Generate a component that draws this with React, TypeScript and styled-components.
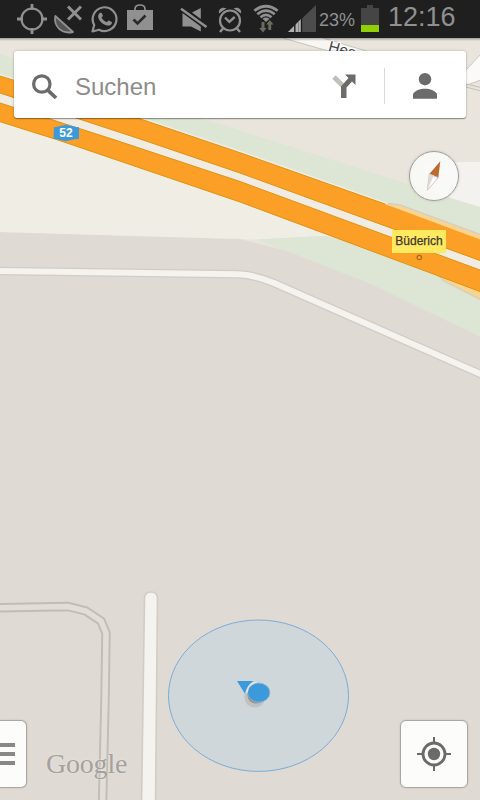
import React from 'react';
import styled, { createGlobalStyle } from 'styled-components';

const colors = {
  land: '#e9e5dd',
  field: '#f0ede4',
  block: '#dfdad4',
  park: '#dde5d4',
  highway: '#fb9f26',
  highwayEdge: '#e0920f',
  road: '#f5f3ef',
  roadEdge: '#d2ccc3',
  statusIcon: '#909090',
  icon: '#6b6b6b',
  blue: '#3d9ada',
};

const GlobalStyle = createGlobalStyle`
  * {
    box-sizing: border-box;
  }
  body {
    margin: 0;
    font-family: 'Liberation Sans', Arial, sans-serif;
  }
  svg {
    display: block;
  }
`;

const Screen = styled.div`
  display: flex;
  flex-direction: column;
  width: 480px;
  height: 800px;
  overflow: hidden;
`;

const StatusBar = styled.header`
  display: flex;
  justify-content: space-between;
  flex: none;
  height: 38px;
  padding: 0 25px 0 14px;
  background: #1f1f1f;
  color: ${colors.statusIcon};
`;

const StatusGroup = styled.div`
  display: flex;
  height: 38px;
`;

const StatusIcon = styled.svg<{ $width?: number }>`
  width: ${({ $width = 36 }) => $width}px;
  height: 38px;
  flex: none;
`;

const BatteryLevel = styled.span`
  width: 39px;
  padding-left: 1px;
  font-size: 18px;
  line-height: 40px;
  white-space: nowrap;
`;

const Clock = styled.span`
  width: 67px;
  margin-left: 7px;
  font-size: 27px;
  line-height: 34px;
  white-space: nowrap;
`;

const MapArea = styled.main`
  position: relative;
  display: flex;
  flex-direction: column;
  flex: 1;
  overflow: hidden;
  background: ${colors.block};
`;

const MapCanvas = styled.svg`
  position: absolute;
  inset: 0;
  width: 480px;
  height: 762px;
`;

const SearchCard = styled.div`
  position: relative;
  display: flex;
  align-items: center;
  height: 67px;
  margin: 13px 14px 0;
  padding: 2px 28px 0 17px;
  background: #fff;
  border-radius: 3px;
  box-shadow: 0 1px 1px rgba(0, 0, 0, 0.35), 0 0 3px rgba(0, 0, 0, 0.2);
`;

const SearchText = styled.span`
  flex: 1;
  padding: 3px 0 0 17px;
  color: #8c8c89;
  font-size: 24px;
  line-height: 28px;
`;

const Divider = styled.span`
  width: 1px;
  height: 36px;
  margin: 0 27px 0 28px;
  background: #dcd8d2;
`;

const Compass = styled.div`
  position: relative;
  align-self: flex-end;
  width: 50px;
  height: 50px;
  margin: 33px 21px 0 0;
  border: 1px solid #a09d98;
  border-radius: 50%;
  background: rgba(250, 249, 247, 0.9);
  box-shadow: 0 0 3px rgba(0, 0, 0, 0.15);
`;

const BottomBar = styled.div`
  position: relative;
  display: flex;
  align-items: flex-start;
  margin: auto 12px 12px 0;
`;

const MapButton = styled.button<{ $docked?: boolean }>`
  display: flex;
  align-items: center;
  justify-content: ${({ $docked }) => ($docked ? 'flex-start' : 'center')};
  width: ${({ $docked }) => ($docked ? 27 : 68)}px;
  height: 68px;
  padding: 0;
  border: 1px solid #aaa7a2;
  border-left-width: ${({ $docked }) => ($docked ? 0 : 1)}px;
  border-radius: ${({ $docked }) => ($docked ? '0 6px 6px 0' : '6px')};
  background: #fcfcfa;
  box-shadow: 0 0 2px rgba(0, 0, 0, 0.15);
`;

const Watermark = styled.span`
  flex: 1;
  padding: 28px 0 0 19px;
  color: #a5a19c;
  font-family: 'Liberation Serif', 'Times New Roman', serif;
  font-size: 28px;
  line-height: 32px;
  letter-spacing: -0.2px;
  text-shadow: 0 0 2px #efece7;
`;

const PlaceLabel = styled.span`
  position: absolute;
  left: 392px;
  top: 192px;
  width: 54px;
  height: 23px;
  background: #ffe95f;
  color: #3f3530;
  font-size: 12px;
  line-height: 22px;
  text-align: center;
  -webkit-text-stroke: 0.25px #3f3530;
`;

const Highway: React.FC<{ top: string; bottom: string; area: string }> = ({ top, bottom, area }) => (
  <g>
    <path d={area} fill={colors.highway} />
    <path d={top} fill='none' stroke={colors.highwayEdge} />
    <path d={bottom} fill='none' stroke={colors.highwayEdge} />
  </g>
);

const Road: React.FC<{ d: string; width: number }> = ({ d, width }) => (
  <g fill='none' strokeLinejoin='round' strokeLinecap='round'>
    <path d={d} stroke={colors.roadEdge} strokeWidth={width + 2.5} />
    <path d={d} stroke={colors.road} strokeWidth={width} />
  </g>
);

const TRACK = 'M-5 607.8 L68 606.5 L86 611 L101 621 L106 633 L105 700 L102.5 805';

const MapDrawing: React.FC = () => (
  <MapCanvas viewBox='0 38 480 762'>
    <defs>
      <linearGradient id='barShade' x1='0' y1='0' x2='0' y2='1'>
        <stop offset='0' stopColor='#000' stopOpacity='0.3' />
        <stop offset='1' stopColor='#000' stopOpacity='0' />
      </linearGradient>
    </defs>

    {/* areas */}
    <path d='M0 38 H480 V300 L240 239 L0 232 Z' fill={colors.land} />
    <path d='M0 54 L480 207 V336.5 L370 283.5 L257 239 L0 130 Z' fill={colors.park} />
    <path d='M0 74 L142 117.5 L240 150.5 L385 202 L480 250 V275 L325 236 L257 239.5 L0 232 Z' fill={colors.field} />
    <path d='M325 236 L257 239.5 L370 283.5 L480 336.5 V280 L400 250 Z' fill={colors.park} />
    <path d='M420 162 H480 V207 L440 194.5 Z' fill='#f4f2ef' />

    {/* streets at the top edge */}
    <path d='M283 38 L330 51.5 H368 L323 38 Z' fill='#f7f6f3' />
    <path d='M283 38 L330 51.5 M323 38 L368 51.5' stroke='#c9c4bb' fill='none' />
    <path d='M481 54 L464 72 V86 L481 80 Z' fill='#fbfaf8' stroke='#cbc6be' />
    <path d='M464 83.5 L481 87.5 M464 86.5 L481 91' stroke='#c4bfb8' fill='none' />
    <text x='327.5' y='51' transform='rotate(15 327.5 51)' fontSize='15.5' fill='#484848' stroke='#fff' strokeWidth='2' paintOrder='stroke'>
      Hes
    </text>

    {/* slip roads */}
    <path d='M384 203 L400 205.5 L480 234.5 V250 Z' fill='#f8d48f' />
    <path d='M388 203.5 L400 205 L480 234.5' stroke='#d2cdc4' strokeWidth='1.3' fill='none' />
    <path d='M436 274 L445 281 L480 299.5 V285 Z' fill='#f8d48f' />
    <path d='M438 275.5 L445 281.5 L480 299.5' stroke='#d2cdc4' strokeWidth='1.3' fill='none' />

    <path d='M0 93 L143 140 L240 173 L480 261 V270 L240 181.5 L115 140 L0 103 Z' fill='#f0ece3' />
    <Highway
      area='M0 76 L142 119.5 L240 152.7 L385 204 L480 239.5 V260.7 L240 173 L143 140 L0 93 Z'
      top='M0 76 L142 119.5 L240 152.7 L385 204'
      bottom='M0 93 L143 140 L240 173 L480 260.5'
    />
    <Highway
      area='M0 103 L115 140 L240 181.5 L480 270 V291.5 L440 276.5 L240 202 L58 140 L0 121.7 Z'
      top='M0 103 L115 140 L240 181.5 L480 270'
      bottom='M0 121.7 L58 140 L240 202 L440 276.5 L480 291.5'
    />

    <Road d='M-5 271 L238 274.3 Q255 275 274 283 L485 376' width={6} />
    <path d='M151 592 Q145 592 144.5 598 L141.5 805 H155.5 L157.5 598 Q157 592 151 592 Z' fill={colors.road} stroke={colors.roadEdge} strokeWidth='1.6' />
    <path d={TRACK} fill='none' stroke='#c0bcb6' strokeWidth='9.4' />
    <path d={TRACK} fill='none' stroke='#e2ddd7' strokeWidth='5.6' />

    {/* road number */}
    <path d='M54 127 Q57 127.5 60 126 L66 124.8 L72 126 Q76 127.5 79 127 V139 Q75 138.5 72 140 L66 141.2 L60 140 Q56 138.5 53.5 139 Z' fill={colors.blue} />
    <text x='66' y='137.4' fontSize='12' fontWeight='700' fill='#fff' textAnchor='middle'>
      52
    </text>
    <circle cx='419.3' cy='257.5' r='2.2' fill='#f5a93a' stroke='#a96a12' strokeWidth='1.2' />

    {/* current position */}
    <ellipse cx='258.5' cy='695.7' rx='90' ry='75.7' fill='#cfd7da' stroke='#7badd8' />
    <ellipse cx='254.8' cy='697' rx='10.5' ry='10.5' fill='#bab7b2' opacity='0.65' />
    <ellipse cx='256.5' cy='695.5' rx='9' ry='8' fill='#96928e' />
    <path d='M237 681 H253.5 Q248 684 244.8 693.5 Z' fill={colors.blue} />
    <ellipse cx='258.7' cy='692.6' rx='11.2' ry='9.6' fill={colors.blue} stroke='#94b7cd' strokeWidth='0.8' />
    <path d='M246.8 693 Q247.5 684 256.5 682' fill='none' stroke='#e0e2e0' strokeWidth='1.5' />

    <rect x='0' y='38' width='480' height='3' fill='url(#barShade)' />
  </MapCanvas>
);

const NotificationIcons: React.FC = () => (
  <StatusGroup>
    <StatusIcon viewBox='0 0 36 38' fill='none' stroke='currentColor' strokeWidth='2.2'>
      <circle cx='18' cy='19' r='10.5' />
      <path d='M18 4 V10 M18 28 V34 M3 19 H9 M27 19 H33' strokeWidth='2.8' />
    </StatusIcon>
    <StatusIcon viewBox='0 0 36 38' fill='none' stroke='currentColor'>
      <path d='M5.3 16 C3.5 26 11 34.5 23 32 Z' fill='#555' strokeWidth='1.8' strokeLinejoin='round' />
      <path d='M18 6.5 L31 19.5 M31 6.5 L18 19.5' strokeWidth='3' />
    </StatusIcon>
    <StatusIcon viewBox='0 0 36 38' fill='none' stroke='currentColor'>
      <path d='M6.5 31.5 L8.2 25 A11.9 11.9 0 1 1 13 29.7 Z' strokeWidth='2.2' strokeLinejoin='round' />
      <path
        d='M14.4 12.8 C15.5 12.3 16 13 16.8 15.4 C17 16.2 15.7 17 15.5 17.6 C16.8 20.2 18.6 21.5 21 22.2 C21.7 21.5 22.2 20.5 23 20.6 L26 22.2 C26 25.5 22.5 26.1 20 25.2 C15.6 23.6 12.7 20.2 12.2 17 C12 15.2 13 13.2 14.4 12.8 Z'
        fill='currentColor'
        stroke='none'
      />
    </StatusIcon>
    <StatusIcon viewBox='0 0 36 38' fill='none'>
      <path d='M5 10 H31 V30 H5 Z' fill='currentColor' />
      <path d='M13 11 V9 Q13 5 18 5 Q23 5 23 9 V11' stroke='currentColor' strokeWidth='1.7' />
      <path d='M11.5 19.5 L15.5 23.5 L23.5 15.5' stroke='#2a2a2a' strokeWidth='2.6' />
    </StatusIcon>
  </StatusGroup>
);

const SystemIcons: React.FC = () => (
  <StatusGroup>
    <StatusIcon viewBox='0 0 36 38'>
      <path d='M16 12.5 L24.8 8 V19 Z' fill='currentColor' />
      <path d='M6.5 13 L24.8 26.5 V31.5 L15 26.5 H6.5 Z' fill='currentColor' />
      <path d='M4 8 L31 27.3' stroke='#1f1f1f' strokeWidth='4.4' />
      <path d='M5 8.7 L30.5 26.9' stroke='currentColor' strokeWidth='2.5' />
    </StatusIcon>
    <StatusIcon viewBox='0 0 36 38' fill='none' stroke='currentColor'>
      <circle cx='18' cy='20.5' r='10' strokeWidth='2.2' />
      <path d='M13 17.5 L17.3 21.8 L22.7 17' strokeWidth='2.4' />
      <path d='M7 13.5 C6 9.5 9.5 6.5 14.5 8.3 Z M29 13.5 C30 9.5 26.5 6.5 21.5 8.3 Z' fill='currentColor' stroke='none' />
      <path d='M11 28.5 L8 32 M25 28.5 L28 32' strokeWidth='2.5' />
    </StatusIcon>
    <StatusIcon viewBox='0 0 36 38' fill='none' stroke='currentColor' strokeWidth='2.7'>
      <path d='M6.3 10.8 Q18 1.7 29.7 10.8' />
      <path d='M9.3 14.2 Q18 6.9 26.7 14.2' />
      <path d='M12.5 17.3 Q18 12.3 23.5 17.3' />
      <path d='M14.5 18.8 Q18 16.2 21.5 18.8 L18 22 Z' fill='currentColor' stroke='none' />
      <path d='M13.5 22 H16.5 V28 H18.5 L15 32.5 L11.2 28 H13.5 Z M20.3 30 H23.2 V24.5 H25.5 L21.8 20 L18.2 24.5 H20.3 Z' fill='#6b6b60' stroke='none' />
    </StatusIcon>
    <StatusIcon $width={34} viewBox='0 0 34 38'>
      <path d='M4 32 L32 5 V32 Z' fill='#4c4c4c' />
      <path d='M4 32 L17.5 18.5 V32 Z' fill='#b0b0b0' />
      <path d='M10.8 24 V32 M17.5 17 V32' stroke='#1f1f1f' strokeWidth='1.4' />
      <path d='M14.5 21.5 V32' stroke='#777' strokeWidth='0.8' />
    </StatusIcon>
    <BatteryLevel>23%</BatteryLevel>
    <StatusIcon $width={24} viewBox='0 0 24 38'>
      <path d='M10 5 H16 V8 H22 V25 H4 V8 H10 Z' fill='#454545' />
      <path d='M4 25 H22 V32 H4 Z' fill='#90d000' />
    </StatusIcon>
    <Clock>12:16</Clock>
  </StatusGroup>
);

const App: React.FC = () => (
  <>
    <GlobalStyle />
    <Screen>
      <StatusBar>
        <NotificationIcons />
        <SystemIcons />
      </StatusBar>
      <MapArea>
        <MapDrawing />
        <PlaceLabel>Büderich</PlaceLabel>
        <SearchCard>
          <svg width='27' height='28' viewBox='0 0 27 28' fill='none' stroke={colors.icon}>
            <circle cx='10.8' cy='12' r='8.2' strokeWidth='3.2' />
            <path d='M16.5 17.8 L25 26' strokeWidth='3.8' />
          </svg>
          <SearchText>Suchen</SearchText>
          <svg width='24' height='24' viewBox='0 0 24 24'>
            <path d='M2 3 L11 12' stroke='#c1bfb9' strokeWidth='4.8' />
            <path d='M13 0.5 H23.5 V11 L20 7.5 L14.5 13.5 V24 H9 V12.5 L16.5 4 Z' fill={colors.icon} />
          </svg>
          <Divider />
          <svg width='26' height='26' viewBox='0 0 26 26' fill={colors.icon}>
            <circle cx='13' cy='6.2' r='6.2' />
            <path d='M1 25.8 V21 C3 17.5 8 15.8 13 15.8 C18 15.8 23 17.5 25 21 V25.8 Z' />
          </svg>
        </SearchCard>
        <Compass>
          <svg width='48' height='48' viewBox='410 152 48 48'>
            <path d='M440.3 161.3 L429.3 174 L438.3 177.7 Z' fill='#bd6a30' />
            <path d='M429.3 174 L438.3 177.7 L427.3 190.3 Z' fill='#fff' stroke='#c6c2bd' strokeWidth='0.9' />
            <path d='M433.8 175.8 L427.3 190.3 L429.3 174 Z' fill='#dedbd7' />
          </svg>
        </Compass>
        <BottomBar>
          <MapButton $docked aria-label='Menu'>
            <svg width='15' height='22' viewBox='0 0 15 22' fill='#888'>
              <path d='M0 0 H15 V4 H0 Z M0 9 H15 V13 H0 Z M0 18 H15 V22 H0 Z' />
            </svg>
          </MapButton>
          <Watermark>Google</Watermark>
          <MapButton aria-label='My location'>
            <svg width='34' height='34' viewBox='0 0 34 34' fill='none' stroke={colors.icon}>
              <circle cx='17' cy='17' r='11' strokeWidth='2.8' />
              <circle cx='17' cy='17' r='6.2' fill={colors.icon} stroke='none' />
              <path d='M17 0 V6 M17 28 V34 M0 17 H6 M28 17 H34' strokeWidth='2' />
            </svg>
          </MapButton>
        </BottomBar>
      </MapArea>
    </Screen>
  </>
);

export default App;
